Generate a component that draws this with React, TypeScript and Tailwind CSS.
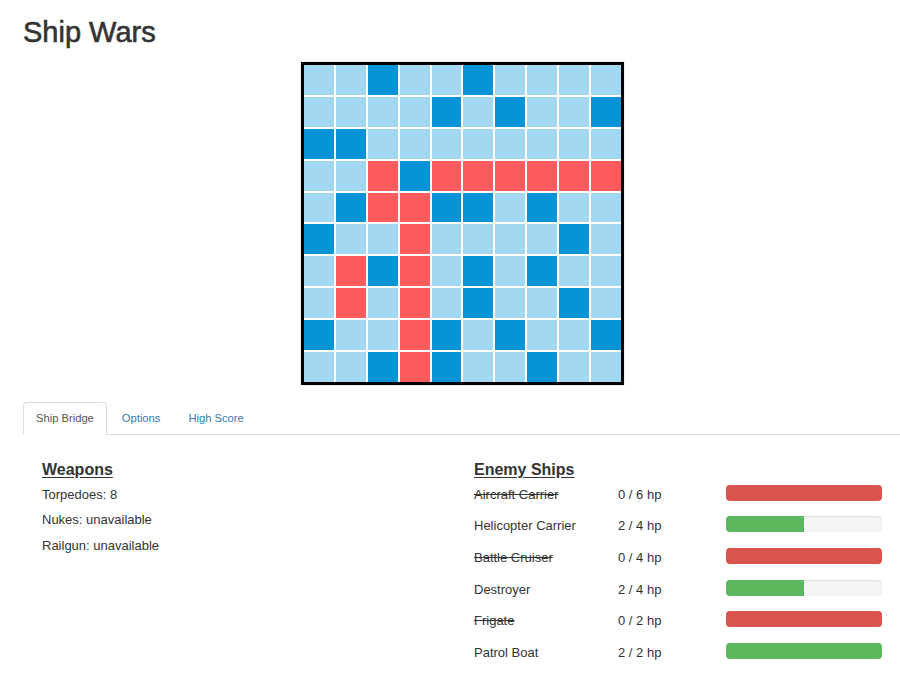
import React from "react";

const GRID = [
  "LLDLLDLLLL",
  "LLLLDLDLLD",
  "DDLLLLLLLL",
  "LLRDRRRRRR",
  "LDRRDDLDLL",
  "DLLRLLLLDL",
  "LRDRLDLDLL",
  "LRLRLDLLDL",
  "DLLRDLDLLD",
  "LLDRDLLDLL",
];

const ships = [
  { name: "Aircraft Carrier", hp: 0, max: 6 },
  { name: "Helicopter Carrier", hp: 2, max: 4 },
  { name: "Battle Cruiser", hp: 0, max: 4 },
  { name: "Destroyer", hp: 2, max: 4 },
  { name: "Frigate", hp: 0, max: 2 },
  { name: "Patrol Boat", hp: 2, max: 2 },
];

function Cell({ t }: { t: string }) {
  const cls =
    t === "D"
      ? "bg-[#0893d4]"
      : t === "R"
      ? "bg-[#fe5c5c]"
      : "bg-[#a2d8f1]";
  return <div className={cls} />;
}

export default function App() {
  return (
    <div
      className="bg-white text-[#333] pl-[23px] pt-[15px] min-h-[675px]"
      style={{ fontFamily: '"Liberation Sans", Arial, Helvetica, sans-serif' }}
    >
      <h1 className="text-[29px] leading-[34px] font-normal [-webkit-text-stroke:0.6px_#333]">
        Ship Wars
      </h1>

      <div className="mt-[13px] ml-[278px] w-[323px] h-[323px] border-[3px] border-black bg-white grid grid-cols-10 grid-rows-10 gap-[2px] shadow-[0_0_1px_rgba(0,0,0,0.4)]">
        {GRID.flatMap((row, r) =>
          row.split("").map((t, c) => <Cell key={`${r}-${c}`} t={t} />)
        )}
      </div>

      <div className="mt-[17px] flex border-b border-[#ddd] h-[33px] text-[11.2px]">
        <div className="-mb-px h-[33px] px-[12px] leading-[31px] border border-[#ddd] border-b-white bg-white rounded-t-[4px] text-[#555] mr-[2px]">
          Ship Bridge
        </div>
        <div className="-mb-px h-[33px] px-[12px] leading-[31px] border border-transparent text-[#337ab7] mr-[2px]">
          Options
        </div>
        <div className="-mb-px h-[33px] px-[12px] leading-[31px] border border-transparent text-[#337ab7] mr-[2px]">
          High Score
        </div>
      </div>

      <div className="flex pl-[19px] pt-[23px]">
        <div className="w-[432px]">
          <h3 className="text-[16px] leading-[23px] font-bold underline underline-offset-[2px]">
            Weapons
          </h3>
          <div className="text-[13px] leading-[25.3px] mt-px">
            <div>Torpedoes: 8</div>
            <div>Nukes: unavailable</div>
            <div>Railgun: unavailable</div>
          </div>
        </div>
        <div>
          <h3 className="text-[16px] leading-[23px] font-bold underline underline-offset-[2px]">
            Enemy Ships
          </h3>
          <div className="-mt-[2.5px] text-[13px]">
            {ships.map((s) => {
              const pct = (s.hp / s.max) * 100;
              const dead = s.hp === 0;
              return (
                <div key={s.name} className="flex h-[31.7px] leading-[31.7px]">
                  <div className={`w-[144px] ${dead ? "line-through" : ""}`}>
                    {s.name}
                  </div>
                  <div className="w-[108px]">
                    {s.hp} / {s.max} hp
                  </div>
                  <div className="mt-[6px] w-[156px] h-[16px] rounded-[4px] bg-[#f5f5f5] shadow-[inset_0_1px_2px_rgba(0,0,0,0.1)] overflow-hidden">
                    {dead ? (
                      <div className="h-full w-full bg-[#d9534f]" />
                    ) : (
                      <div
                        className="h-full bg-[#5cb85c]"
                        style={{ width: `${pct}%` }}
                      />
                    )}
                  </div>
                </div>
              );
            })}
          </div>
        </div>
      </div>
    </div>
  );
}
